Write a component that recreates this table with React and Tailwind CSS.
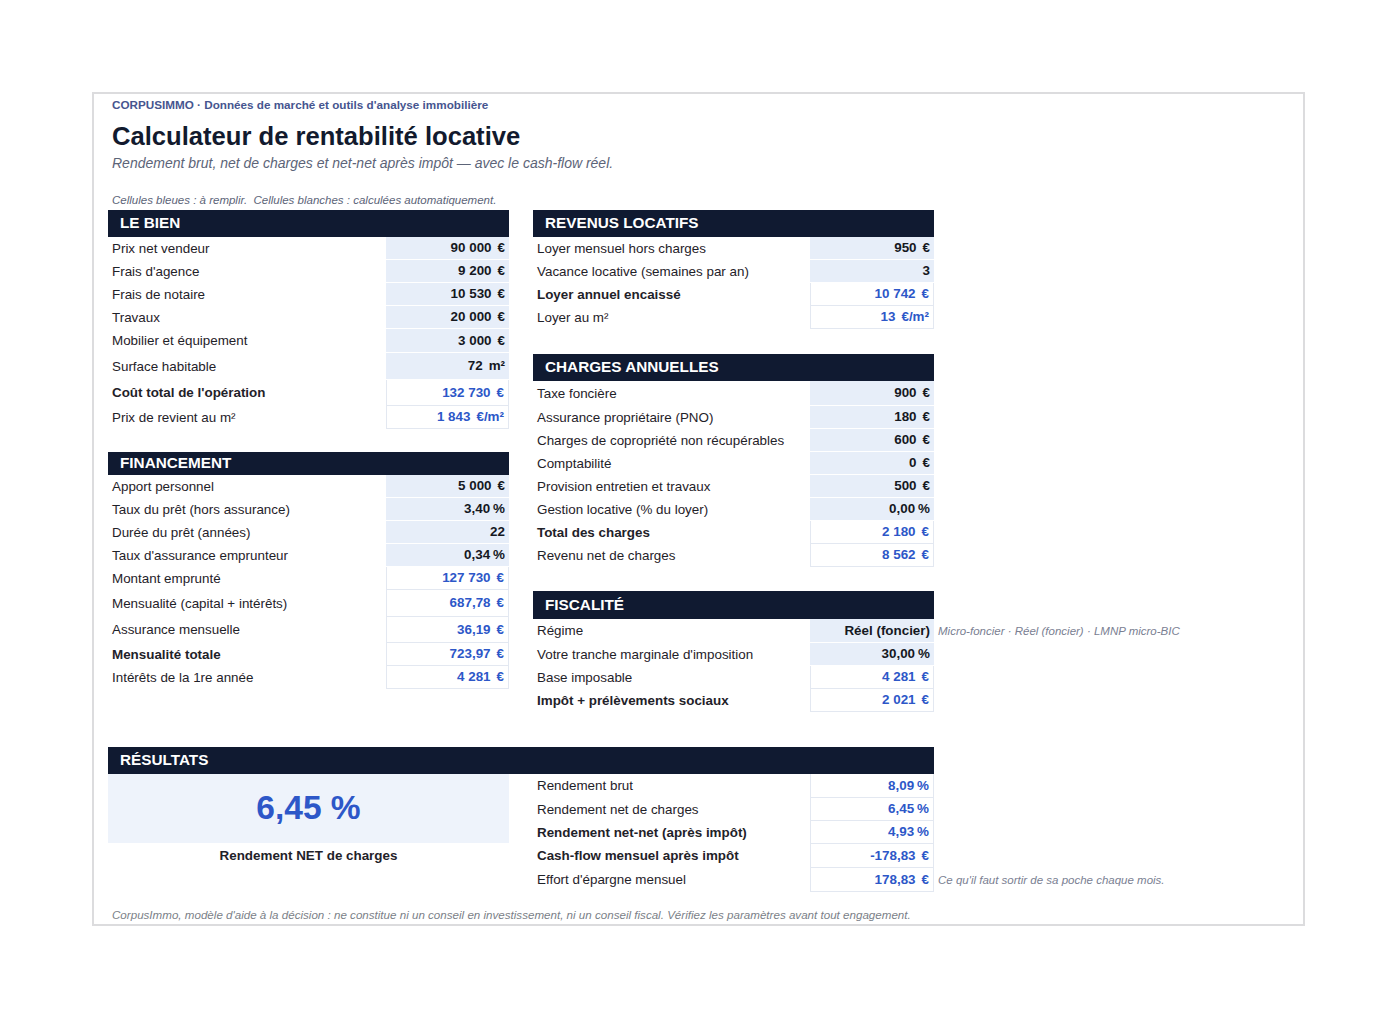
import React from 'react';

const CALC = 'text-[#2d57c8]';

const leBien = [
    { label: 'Prix net vendeur', value: '90 000', unit: '€', input: true, h: 'h-[23px]' },
    { label: "Frais d'agence", value: '9 200', unit: '€', input: true, h: 'h-[23px]' },
    { label: 'Frais de notaire', value: '10 530', unit: '€', input: true, h: 'h-[23px]' },
    { label: 'Travaux', value: '20 000', unit: '€', input: true, h: 'h-[23px]' },
    { label: 'Mobilier et équipement', value: '3 000', unit: '€', input: true, h: 'h-[24px]' },
    { label: 'Surface habitable', value: '72', unit: 'm²', input: true, h: 'h-[27px]' },
    { label: "Coût total de l'opération", value: '132 730', unit: '€', bold: true, h: 'h-[26px]' },
    { label: 'Prix de revient au m²', value: '1 843', unit: '€/m²', h: 'h-[23px]' },
];

const financement = [
    { label: 'Apport personnel', value: '5 000', unit: '€', input: true, h: 'h-[23px]' },
    { label: 'Taux du prêt (hors assurance)', value: '3,40', unit: '%', input: true, h: 'h-[23px]' },
    { label: 'Durée du prêt (années)', value: '22', input: true, h: 'h-[23px]' },
    { label: "Taux d'assurance emprunteur", value: '0,34', unit: '%', input: true, h: 'h-[23px]' },
    { label: 'Montant emprunté', value: '127 730', unit: '€', h: 'h-[23px]' },
    { label: 'Mensualité (capital + intérêts)', value: '687,78', unit: '€', h: 'h-[27px]' },
    { label: 'Assurance mensuelle', value: '36,19', unit: '€', h: 'h-[26px]' },
    { label: 'Mensualité totale', value: '723,97', unit: '€', bold: true, h: 'h-[23px]' },
    { label: 'Intérêts de la 1re année', value: '4 281', unit: '€', h: 'h-[23px]' },
];

const revenus = [
    { label: 'Loyer mensuel hors charges', value: '950', unit: '€', input: true, h: 'h-[23px]' },
    { label: 'Vacance locative (semaines par an)', value: '3', input: true, h: 'h-[23px]' },
    { label: 'Loyer annuel encaissé', value: '10 742', unit: '€', bold: true, h: 'h-[23px]' },
    { label: 'Loyer au m²', value: '13', unit: '€/m²', h: 'h-[23px]' },
];

const charges = [
    { label: 'Taxe foncière', value: '900', unit: '€', input: true, h: 'h-[25px]' },
    { label: 'Assurance propriétaire (PNO)', value: '180', unit: '€', input: true, h: 'h-[23px]' },
    { label: 'Charges de copropriété non récupérables', value: '600', unit: '€', input: true, h: 'h-[23px]' },
    { label: 'Comptabilité', value: '0', unit: '€', input: true, h: 'h-[23px]' },
    { label: 'Provision entretien et travaux', value: '500', unit: '€', input: true, h: 'h-[23px]' },
    { label: 'Gestion locative (% du loyer)', value: '0,00', unit: '%', input: true, h: 'h-[23px]' },
    { label: 'Total des charges', value: '2 180', unit: '€', bold: true, h: 'h-[23px]' },
    { label: 'Revenu net de charges', value: '8 562', unit: '€', h: 'h-[23px]' },
];

const fiscalite = [
    { label: 'Régime', value: 'Réel (foncier)', input: true, h: 'h-[24px]', note: 'Micro-foncier · Réel (foncier) · LMNP micro-BIC' },
    { label: "Votre tranche marginale d'imposition", value: '30,00', unit: '%', input: true, h: 'h-[23px]' },
    { label: 'Base imposable', value: '4 281', unit: '€', h: 'h-[23px]' },
    { label: 'Impôt + prélèvements sociaux', value: '2 021', unit: '€', bold: true, h: 'h-[23px]' },
];

const resultats = [
    { label: 'Rendement brut', value: '8,09', unit: '%', h: 'h-[24px]' },
    { label: 'Rendement net de charges', value: '6,45', unit: '%', h: 'h-[23px]' },
    { label: 'Rendement net-net (après impôt)', value: '4,93', unit: '%', bold: true, h: 'h-[23px]' },
    { label: 'Cash-flow mensuel après impôt', value: '-178,83', unit: '€', bold: true, h: 'h-[24px]' },
    { label: "Effort d'épargne mensuel", value: '178,83', unit: '€', h: 'h-[24px]', note: "Ce qu'il faut sortir de sa poche chaque mois." },
];

const SectionHeader = ({ title, h = 'h-[27px]', width = 'w-[401px]' }) => (
    <div className={`${h} ${width} bg-[#101a31] text-white font-bold text-[15.3px] pl-[12px] flex items-center`}>
        {title}
    </div>
);

const Unit = ({ unit }) => {
    if (!unit) return null;
    return <span className={unit === '%' ? 'ml-[3px]' : 'ml-[6px]'}>{unit}</span>;
};

const Row = ({ row, labelW = 'w-[278px]', valueW = 'w-[123px]' }) => (
    <div className={`flex ${row.h}`}>
        <div className={`${labelW} shrink-0 pl-[4px] pt-[1px] flex items-center text-[13.4px] text-[#1f2229] ${row.bold ? 'font-bold' : ''}`}>
            {row.label}
        </div>
        <div
            className={`${valueW} shrink-0 pr-[4px] pt-[1px] flex items-center justify-end font-bold text-[13.4px] whitespace-nowrap ${
                row.input
                    ? 'bg-[#e7eef9] border-b border-white text-[#15181f]'
                    : `bg-white border-x border-b border-[#e3e8f1] ${CALC}`
            }`}
        >
            {row.value}
            <Unit unit={row.unit} />
        </div>
        {row.note && (
            <div className="pl-[4px] pt-[1px] flex items-center italic text-[11.5px] text-[#7a8092] whitespace-nowrap">
                {row.note}
            </div>
        )}
    </div>
);

const App = () => {
    return (
        <div className="min-h-screen bg-white font-['Liberation_Sans',Arial,sans-serif] pt-[92px] pl-[92px]">
            <div className="w-[1213px] border-2 border-[#dcdcde] px-[14px] pt-[4px] pb-[2px]">
                <div className="h-[14px] pl-[4px] flex items-center text-[11.7px] font-bold text-[#46558f]">
                    CORPUSIMMO · Données de marché et outils d'analyse immobilière
                </div>
                <h1 className="mt-[9px] h-[30px] pl-[4px] flex items-center text-[25.6px] font-bold text-[#121a2e]">
                    Calculateur de rentabilité locative
                </h1>
                <p className="mt-[4px] h-[16px] pl-[4px] flex items-center italic text-[14px] text-[#5c6478]">
                    Rendement brut, net de charges et net-net après impôt — avec le cash-flow réel.
                </p>
                <p className="mt-[23px] h-[14px] pl-[4px] flex items-center italic text-[11.5px] text-[#5c6478]">
                    Cellules bleues : à remplir.&nbsp; Cellules blanches : calculées automatiquement.
                </p>

                <div className="mt-[2px] flex">
                    <div className="w-[401px] flex flex-col">
                        <SectionHeader title="LE BIEN" />
                        {leBien.map((r) => <Row key={r.label} row={r} />)}
                        <div className="h-[23px]" />
                        <SectionHeader title="FINANCEMENT" h="h-[23px]" />
                        {financement.map((r) => <Row key={r.label} row={r} />)}
                    </div>
                    <div className="w-[24px]" />
                    <div className="flex flex-col">
                        <SectionHeader title="REVENUS LOCATIFS" />
                        {revenus.map((r) => <Row key={r.label} row={r} labelW="w-[277px]" valueW="w-[124px]" />)}
                        <div className="h-[25px]" />
                        <SectionHeader title="CHARGES ANNUELLES" />
                        {charges.map((r) => <Row key={r.label} row={r} labelW="w-[277px]" valueW="w-[124px]" />)}
                        <div className="h-[24px]" />
                        <SectionHeader title="FISCALITÉ" h="h-[28px]" />
                        {fiscalite.map((r) => <Row key={r.label} row={r} labelW="w-[277px]" valueW="w-[124px]" />)}
                    </div>
                </div>

                <div className="mt-[35px]">
                    <SectionHeader title="RÉSULTATS" width="w-[826px]" />
                    <div className="flex">
                        <div className="w-[401px] flex flex-col">
                            <div className="h-[69px] bg-[#eef3fb] flex items-center justify-center text-[33.5px] font-bold text-[#2d57c8]">
                                6,45 %
                            </div>
                            <div className="h-[25px] pt-[1px] flex items-center justify-center text-[13.4px] font-bold text-[#1f2229]">
                                Rendement NET de charges
                            </div>
                        </div>
                        <div className="w-[24px]" />
                        <div className="flex flex-col">
                            {resultats.map((r) => <Row key={r.label} row={r} labelW="w-[277px]" valueW="w-[124px]" />)}
                        </div>
                    </div>
                </div>

                <p className="mt-[16px] h-[14px] pl-[4px] flex items-center italic text-[11.6px] text-[#7b7f88]">
                    CorpusImmo, modèle d'aide à la décision : ne constitue ni un conseil en investissement, ni un conseil fiscal. Vérifiez les paramètres avant tout engagement.
                </p>
            </div>
        </div>
    );
};

export default App;
